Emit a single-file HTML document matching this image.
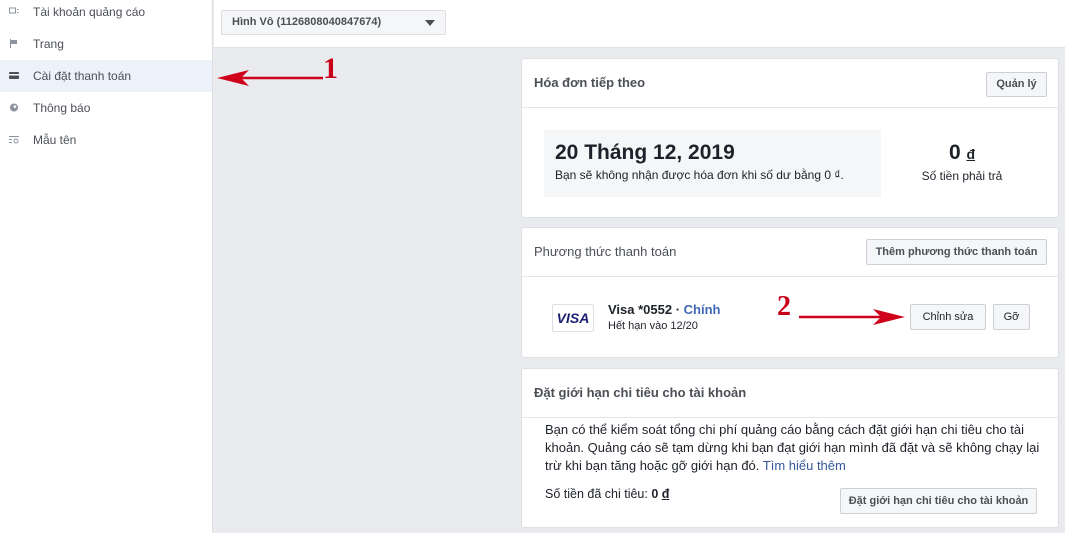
<!DOCTYPE html>
<html><head><meta charset="utf-8"><style>
*{margin:0;padding:0;box-sizing:border-box}
body{width:1065px;height:533px;overflow:hidden;background:#e9ebee;font-family:"Liberation Sans",Arial,sans-serif;color:#1d2129;position:relative;font-size:12px}
.a{position:absolute}
.side{left:0;top:0;width:213px;height:533px;background:#fff;border-right:1px solid #dddfe2}
.it{position:absolute;left:0;width:212px;height:32px;line-height:32px;padding-left:33px;font-size:12px;color:#4b4f56}
.ic{position:absolute;left:9px;top:11px;width:10px;height:9px}
.top{left:214px;top:0;width:851px;height:48px;background:#fff;border-bottom:1px solid #dddfe2}
.card{position:absolute;left:521px;width:538px;background:#fff;border:1px solid #dddfe2;border-radius:3px}
.hd{height:49px;border-bottom:1px solid #e5e5e5;padding:0 12px;line-height:48px;font-size:13px;font-weight:bold;color:#4b4f56}
.btn{position:absolute;background:#f5f6f7;border:1px solid #ced0d4;border-radius:2px;font-size:11px;font-weight:bold;color:#4b4f56;text-align:center}
</style></head><body>
<div class="a side">
 <div class="it" style="top:-4px"><svg class="ic" viewBox="0 0 10 9"><rect x="0.5" y="1" width="6" height="5" fill="none" stroke="#8d949e"/><rect x="8" y="2" width="1.5" height="1" fill="#8d949e"/><rect x="8" y="5" width="1.5" height="1" fill="#8d949e"/></svg>Tài khoản quảng cáo</div>
 <div class="it" style="top:28px"><svg class="ic" viewBox="0 0 10 9"><rect x="1" y="0" width="1" height="9" fill="#8d949e"/><rect x="2" y="1" width="6" height="4" fill="#8d949e"/></svg>Trang</div>
 <div class="it" style="top:60px;background:#edf2fa;color:#4b4f56"><svg class="ic" viewBox="0 0 10 9"><rect x="0" y="1" width="10" height="7" rx="1" fill="#4b4f56"/><rect x="0" y="3" width="10" height="1.5" fill="#fff"/></svg>Cài đặt thanh toán</div>
 <div class="it" style="top:92px"><svg class="ic" viewBox="0 0 10 10"><circle cx="5" cy="5" r="4.5" fill="#8d949e"/><circle cx="6" cy="4" r="1.5" fill="#fff"/></svg>Thông báo</div>
 <div class="it" style="top:124px"><svg class="ic" viewBox="0 0 10 9"><rect x="0" y="1" width="10" height="1" fill="#8d949e"/><rect x="0" y="4" width="3" height="1" fill="#8d949e"/><rect x="0" y="7" width="3" height="1" fill="#8d949e"/><circle cx="7" cy="6" r="2" fill="none" stroke="#8d949e"/></svg>Mẫu tên</div>
</div>
<div class="a top">
 <div class="a" style="left:7px;top:10px;width:225px;height:25px;background:#f5f6f7;border:1px solid #dddfe2;border-radius:2px;font-size:11px;font-weight:bold;line-height:23px;padding-left:10px;color:#4b4f56">Hình Vô (1126808040847674)
  <div class="a" style="right:10px;top:9px;width:0;height:0;border-left:5px solid transparent;border-right:5px solid transparent;border-top:6px solid #4b4f56"></div></div>
</div>
<svg class="a" style="left:215px;top:48px" width="130" height="45"><line x1="108" y1="30" x2="12" y2="30" stroke="#d0021b" stroke-width="2.5"/><path d="M2 30 L34 22 L26 30 L34 38 Z" fill="#d0021b"/><text x="108" y="30" font-family="Liberation Serif" font-weight="bold" font-size="30" fill="#c8001a">1</text></svg>

<div class="card" style="top:58px;height:160px">
 <div class="hd">Hóa đơn tiếp theo</div>
 <div class="btn" style="right:11px;top:13px;width:61px;height:25px;line-height:23px">Quản lý</div>
 <div class="a" style="left:22px;top:71px;width:337px;height:67px;background:#f5f6f7;padding:11px 11px">
  <div style="font-size:21px;font-weight:bold;color:#1d2129">20 Tháng 12, 2019</div>
  <div style="font-size:12px;color:#1d2129;margin-top:3px">Bạn sẽ không nhận được hóa đơn khi số dư bằng 0 ₫.</div></div>
 <div class="a" style="left:380px;top:82px;width:120px;text-align:center;font-size:21px;font-weight:bold">0 <span style="font-size:14px;text-decoration:underline">đ</span></div>
 <div class="a" style="left:380px;top:110px;width:120px;text-align:center;font-size:12px;color:#1d2129">Số tiền phải trả</div>
</div>

<div class="card" style="top:227px;height:131px">
 <div class="hd" style="font-weight:normal">Phương thức thanh toán</div>
 <div class="btn" style="right:11px;top:11px;width:181px;height:26px;line-height:24px">Thêm phương thức thanh toán</div>
 <div class="a" style="left:30px;top:76px;width:42px;height:28px;border:1px solid #dddfe2;border-radius:2px;text-align:center;line-height:26px;font-size:14px;font-weight:bold;font-style:italic;color:#1a1f71">VISA</div>
 <div class="a" style="left:86px;top:74px;font-size:13px;font-weight:bold">Visa *0552 · <span style="color:#4267b2">Chính</span></div>
 <div class="a" style="left:86px;top:92px;font-size:11px;color:#1d2129">Hết hạn vào 12/20</div>
 <div class="btn" style="left:388px;top:76px;width:76px;height:26px;line-height:24px;font-weight:normal;color:#1d2129">Chỉnh sửa</div>
 <div class="btn" style="left:471px;top:76px;width:37px;height:26px;line-height:24px;font-weight:normal;color:#1d2129">Gỡ</div>
</div>
<svg class="a" style="left:775px;top:290px" width="135" height="40"><text x="2" y="25" font-family="Liberation Serif" font-weight="bold" font-size="28" fill="#c8001a">2</text><line x1="24" y1="27" x2="110" y2="27" stroke="#d0021b" stroke-width="2.5"/><path d="M130 27 L98 19 L106 27 L98 35 Z" fill="#d0021b"/></svg>

<div class="card" style="top:368px;height:160px">
 <div class="hd" style="font-weight:bold">Đặt giới hạn chi tiêu cho tài khoản</div>
 <div class="a" style="left:23px;top:52px;width:500px;font-size:13px;line-height:18px;color:#1d2129">Bạn có thể kiểm soát tổng chi phí quảng cáo bằng cách đặt giới hạn chi tiêu cho tài khoản. Quảng cáo sẽ tạm dừng khi bạn đạt giới hạn mình đã đặt và sẽ không chạy lại trừ khi bạn tăng hoặc gỡ giới hạn đó. <span style="color:#365899">Tìm hiểu thêm</span></div>
 <div class="a" style="left:23px;top:118px;font-size:12.5px">Số tiền đã chi tiêu: <b>0 <u>đ</u></b></div>
 <div class="btn" style="left:318px;top:119px;width:197px;height:26px;line-height:24px">Đặt giới hạn chi tiêu cho tài khoản</div>
</div>
</body></html>
